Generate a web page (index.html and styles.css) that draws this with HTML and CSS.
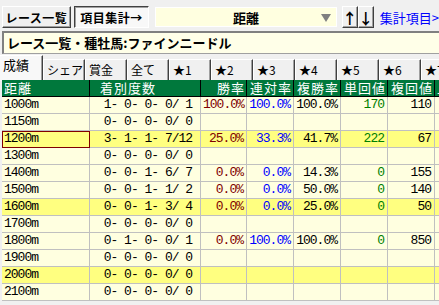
FILE: index.html
```html
<!DOCTYPE html>
<html lang="ja">
<head>
  <meta charset="UTF-8" />
  <title>集計</title>
  <link rel="stylesheet" href="styles.css">
</head>
<body>
  <div class="toolbar">
    <div class="btn btn-list">レース一覧</div>
    <div class="btn btn-pressed">項目集計→</div>
    <div class="combo">
      <span class="combo-text">距離</span>
      <span class="combo-arrow"></span>
    </div>
    <div class="arrows">
      <div class="btn btn-arrow">↑</div>
      <div class="btn btn-arrow">↓</div>
    </div>
    <span class="link">集計項目&gt;</span>
  </div>

  <div class="title-box">レース一覧・種牡馬:ファインニードル</div>

  <div class="tabs">
    <div class="tab active">成績</div>
    <div class="tab">シェア</div>
    <div class="tab">賞金</div>
    <div class="tab">全て</div>
    <div class="tab">★1</div>
    <div class="tab">★2</div>
    <div class="tab">★3</div>
    <div class="tab">★4</div>
    <div class="tab">★5</div>
    <div class="tab">★6</div>
    <div class="tab">★7</div>
  </div>

  <div class="grid-wrap">
    <div class="grid">
      <div class="hd">距離</div>
      <div class="hd hd-count">着別度数</div>
      <div class="hd r">勝率</div>
      <div class="hd r">連対率</div>
      <div class="hd r">複勝率</div>
      <div class="hd r">単回値</div>
      <div class="hd r">複回値</div>
      <div class="hd">上り</div>
    </div>
    <div class="grid" id="rows"></div>
  </div>

  <script>
    const data = [
      ['1000m', ' 1- 0- 0- 0/ 1', '100.0%', '100.0%', '100.0%', '170', '110', false],
      ['1150m', ' 0- 0- 0- 0/ 0', '', '', '', '', '', false],
      ['1200m', ' 3- 1- 1- 7/12', '25.0%', '33.3%', '41.7%', '222', '67', true],
      ['1300m', ' 0- 0- 0- 0/ 0', '', '', '', '', '', false],
      ['1400m', ' 0- 0- 1- 6/ 7', '0.0%', '0.0%', '14.3%', '0', '155', false],
      ['1500m', ' 0- 0- 1- 1/ 2', '0.0%', '0.0%', '50.0%', '0', '140', false],
      ['1600m', ' 0- 0- 1- 3/ 4', '0.0%', '0.0%', '25.0%', '0', '50', true],
      ['1700m', ' 0- 0- 0- 0/ 0', '', '', '', '', '', false],
      ['1800m', ' 0- 1- 0- 0/ 1', '0.0%', '100.0%', '100.0%', '0', '850', false],
      ['1900m', ' 0- 0- 0- 0/ 0', '', '', '', '', '', false],
      ['2000m', ' 0- 0- 0- 0/ 0', '', '', '', '', '', true],
      ['2100m', ' 0- 0- 0- 0/ 0', '', '', '', '', '', false]
    ];
    const classes = ['c-dist', 'c-count', 'c-win', 'c-ren', 'c-fuku', 'c-tan', 'c-fret', 'c-extra'];
    const rows = document.getElementById('rows');
    data.forEach((row, i) => {
      const values = row.slice(0, 7).concat(['']);
      values.forEach((v, j) => {
        const cell = document.createElement('div');
        cell.className = 'cell ' + classes[j] + (row[7] ? ' hl' : '');
        if (i === 2 && j === 0) cell.className += ' selected';
        cell.textContent = v;
        rows.appendChild(cell);
      });
    });
  </script>
</body>
</html>
```

FILE: styles.css
```css
body {
  margin: 0;
  width: 439px;
  height: 305px;
  overflow: hidden;
  background: #f0f0f0;
  font-family: "Noto Sans CJK JP", sans-serif;
  color: #000;
}

/* top toolbar */
.toolbar {
  display: flex;
  align-items: center;
  height: 22px;
  padding: 6px 0 0 2px;
  white-space: nowrap;
}
.btn {
  box-sizing: border-box;
  height: 22px;
  display: flex;
  align-items: center;
  justify-content: center;
  background: #f0f0f0;
  border: 1px solid;
  border-color: #fff #404040 #404040 #fff;
  box-shadow: inset -1px -1px #a0a0a0;
  font-weight: bold;
  font-size: 12px;
  letter-spacing: 0.5px;
}
.btn-list {
  width: 70px;
}
.btn-pressed {
  width: 77px;
  margin-left: 3px;
  background: #f8f8f8;
  border-color: #404040 #fff #fff #404040;
  box-shadow: inset 1px 1px #a0a0a0;
}
.combo {
  box-sizing: border-box;
  width: 185px;
  height: 20px;
  margin-left: 6px;
  background: #ffffe0;
  border: 1px solid #fff;
  display: flex;
  align-items: center;
  justify-content: center;
  position: relative;
}
.combo-text {
  font-weight: bold;
  font-size: 13px;
}
.combo-arrow {
  position: absolute;
  right: 5px;
  top: 6px;
  width: 0;
  height: 0;
  border-left: 5px solid transparent;
  border-right: 5px solid transparent;
  border-top: 8px solid #808080;
}
.arrows {
  display: flex;
  margin-left: 5px;
}
.btn-arrow {
  width: 16px;
  font-size: 15px;
  letter-spacing: 0;
}
.link {
  margin-left: 6px;
  color: #0000ff;
  font-size: 13px;
}

/* title */
.title-box {
  box-sizing: border-box;
  height: 23px;
  margin: 3px 0 0 2px;
  padding: 0 0 0 3px;
  background: #ffffe8;
  border-top: 2px solid #808080;
  border-left: 2px solid #808080;
  border-bottom: 1px solid #a0a0a0;
  font-weight: bold;
  font-size: 13px;
  line-height: 20px;
  white-space: nowrap;
}

/* tabs */
.tabs {
  display: flex;
  height: 26px;
  white-space: nowrap;
}
.tab {
  box-sizing: border-box;
  flex: 0 0 42px;
  height: 21px;
  margin-top: 5px;
  padding-left: 3px;
  border-top: 1px solid #fff;
  border-left: 1px solid #fff;
  border-right: 1px solid #404040;
  box-shadow: inset -1px 0 #a0a0a0;
  font-size: 12px;
  line-height: 20px;
  overflow: hidden;
}
.tab.active {
  flex-basis: 43px;
  height: 26px;
  margin-top: 1px;
  padding-left: 3px;
  background: #f8f8f8;
  border-left: none;
  font-size: 13px;
  line-height: 18px;
}

/* grid */
.grid-wrap {
  margin-left: 2px;
  width: 437px;
  overflow: hidden;
}
.grid {
  display: grid;
  grid-template-columns: 88px 111px 46px 47px 47px 47px 47px 60px;
  width: 493px;
}
.hd {
  box-sizing: border-box;
  height: 17px;
  background: #00783c;
  color: #fff;
  border-right: 1px solid #000;
  border-bottom: 1px solid #000;
  font-size: 13px;
  letter-spacing: 1px;
  line-height: 16px;
  padding: 0 1px 0 2px;
  white-space: nowrap;
}
.hd.r {
  text-align: right;
}
.hd-count {
  padding-left: 10px;
}
.cell {
  box-sizing: border-box;
  height: 17px;
  background: #ffffe0;
  border-right: 1px solid #c0c0c0;
  border-bottom: 1px solid #c0c0c0;
  font-family: "Liberation Mono", monospace;
  font-size: 13px;
  letter-spacing: -1px;
  line-height: 16px;
  padding: 0 3px 0 2px;
  text-align: right;
  white-space: pre;
}
.cell.hl {
  background: #ffff80;
}
.cell.selected {
  outline: 1px solid #800000;
  outline-offset: -1px;
}
.c-dist {
  text-align: left;
}
.c-count {
  text-align: center;
}
.c-win {
  color: #800000;
}
.c-ren {
  color: #0000ff;
}
.c-tan {
  color: #008000;
}
```
